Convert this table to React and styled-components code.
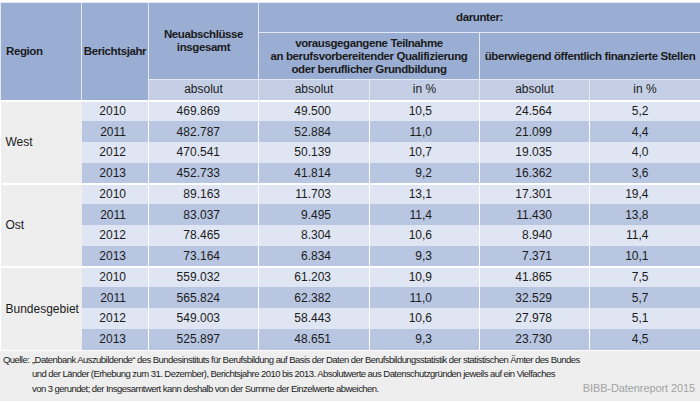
import styled, { createGlobalStyle } from "styled-components";

const GlobalStyle = createGlobalStyle`
  body {
    margin: 0;
    background: #ffffff;
    font-family: "Liberation Sans Narrow", "Liberation Sans", Arial, sans-serif;
    color: #1b1b1b;
  }
`

const Page = styled.div`
  width: 700px;
  padding-top: 2px;
`

const Table = styled.table`
  width: 700px;
  border-collapse: collapse;
  table-layout: fixed;
  font-size: 12px;
`

const Head = styled.th`
  background: ${(p) => (p.$unit ? "#c4cfe6" : "#9aaed4")};
  font-weight: ${(p) => (p.$unit ? "normal" : "bold")};
  text-align: ${(p) => (p.$left ? "left" : "center")};
  padding: 0 ${(p) => (p.$left ? "5px" : "0")};
  border: 1px solid #e4e9f4;
  line-height: 13px;
  height: ${(p) => p.$h || "auto"};
  box-sizing: border-box;
  vertical-align: middle;
  white-space: nowrap;
  font-size: ${(p) => (p.$unit ? "12px" : "11.5px")};
  letter-spacing: ${(p) => (p.$unit ? "0" : "-0.4px")};
`

const Row = styled.tr`
  height: 20.75px;
  border-top: ${(p) => (p.$first ? "2px solid #ffffff" : "none")};
`

const Cell = styled.td`
  background: ${(p) => (p.$dark ? "#b8c6e2" : "#dfe5f2")};
  text-align: right;
  padding: 0 ${(p) => p.$pad}px 0 0;
  border-left: 1px solid #ffffff;
  vertical-align: middle;
  white-space: nowrap;
`

const Year = styled(Cell)`
  border-left: none;
`

const RegionCell = styled.td`
  background: #eeeeee;
  padding: 0 5px;
  vertical-align: middle;
  font-size: 12px;
`

const Note = styled.div`
  background: #eeeeee;
  display: flex;
  justify-content: space-between;
  align-items: flex-end;
  padding: 2px 5px 5px 3px;
  margin-top: 1px;
  font-size: 9.5px;
  letter-spacing: -0.55px;
  line-height: 14.5px;
`

const NoteText = styled.div`
  display: grid;
  grid-template-columns: 29px auto;
  white-space: nowrap;
`

const Credit = styled.div`
  color: #a3a3a3;
  font-size: 11px;
  letter-spacing: -0.1px;
  padding-bottom: 1px;
`

const pads = [22, 38, 38, 47, 37, 52]

const groups = [
  {
    name: "West",
    rows: [
      ["2010", "469.869", "49.500", "10,5", "24.564", "5,2"],
      ["2011", "482.787", "52.884", "11,0", "21.099", "4,4"],
      ["2012", "470.541", "50.139", "10,7", "19.035", "4,0"],
      ["2013", "452.733", "41.814", "9,2", "16.362", "3,6"],
    ],
  },
  {
    name: "Ost",
    rows: [
      ["2010", "89.163", "11.703", "13,1", "17.301", "19,4"],
      ["2011", "83.037", "9.495", "11,4", "11.430", "13,8"],
      ["2012", "78.465", "8.304", "10,6", "8.940", "11,4"],
      ["2013", "73.164", "6.834", "9,3", "7.371", "10,1"],
    ],
  },
  {
    name: "Bundesgebiet",
    rows: [
      ["2010", "559.032", "61.203", "10,9", "41.865", "7,5"],
      ["2011", "565.824", "62.382", "11,0", "32.529", "5,7"],
      ["2012", "549.003", "58.443", "10,6", "27.978", "5,1"],
      ["2013", "525.897", "48.651", "9,3", "23.730", "4,5"],
    ],
  },
]

const App = () => {
  return (
    <Page>
      <GlobalStyle />
      <Table>
        <colgroup>
          <col style={{ width: 81 }} />
          <col style={{ width: 67 }} />
          <col style={{ width: 110 }} />
          <col style={{ width: 111 }} />
          <col style={{ width: 110 }} />
          <col style={{ width: 110 }} />
          <col style={{ width: 111 }} />
        </colgroup>
        <thead>
          <tr>
            <Head rowSpan={3} $left $h="30px">Region</Head>
            <Head rowSpan={3}>Berichtsjahr</Head>
            <Head rowSpan={2}>Neuabschlüsse<br />insgesamt</Head>
            <Head colSpan={4} $h="30px">darunter:</Head>
          </tr>
          <tr>
            <Head colSpan={2} $h="47px">
              vorausgegangene Teilnahme<br />
              an berufsvorbereitender Qualifizierung<br />
              oder beruflicher Grundbildung
            </Head>
            <Head colSpan={2}>überwiegend öffentlich finanzierte Stellen</Head>
          </tr>
          <tr>
            <Head $unit $h="21px">absolut</Head>
            <Head $unit>absolut</Head>
            <Head $unit>in %</Head>
            <Head $unit>absolut</Head>
            <Head $unit>in %</Head>
          </tr>
        </thead>
        <tbody>
          {groups.map((g) =>
            g.rows.map((r, i) => (
              <Row key={g.name + r[0]} $first={i === 0}>
                {i === 0 && <RegionCell rowSpan={4}>{g.name}</RegionCell>}
                {r.map((v, j) =>
                  j === 0 ? (
                    <Year key={j} $dark={i % 2 === 1} $pad={pads[j]}>{v}</Year>
                  ) : (
                    <Cell key={j} $dark={i % 2 === 1} $pad={pads[j]}>{v}</Cell>
                  )
                )}
              </Row>
            ))
          )}
        </tbody>
      </Table>
      <Note>
        <NoteText>
          <span>Quelle:</span>
          <span>„Datenbank Auszubildende“ des Bundesinstituts für Berufsbildung auf Basis der Daten der Berufsbildungsstatistik der statistischen Ämter des Bundes</span>
          <span />
          <span>und der Länder (Erhebung zum 31. Dezember), Berichtsjahre 2010 bis 2013. Absolutwerte aus Datenschutzgründen jeweils auf ein Vielfaches</span>
          <span />
          <span>von 3 gerundet; der Insgesamtwert kann deshalb von der Summe der Einzelwerte abweichen.</span>
        </NoteText>
        <Credit>BIBB-Datenreport 2015</Credit>
      </Note>
    </Page>
  )
}

export default App
